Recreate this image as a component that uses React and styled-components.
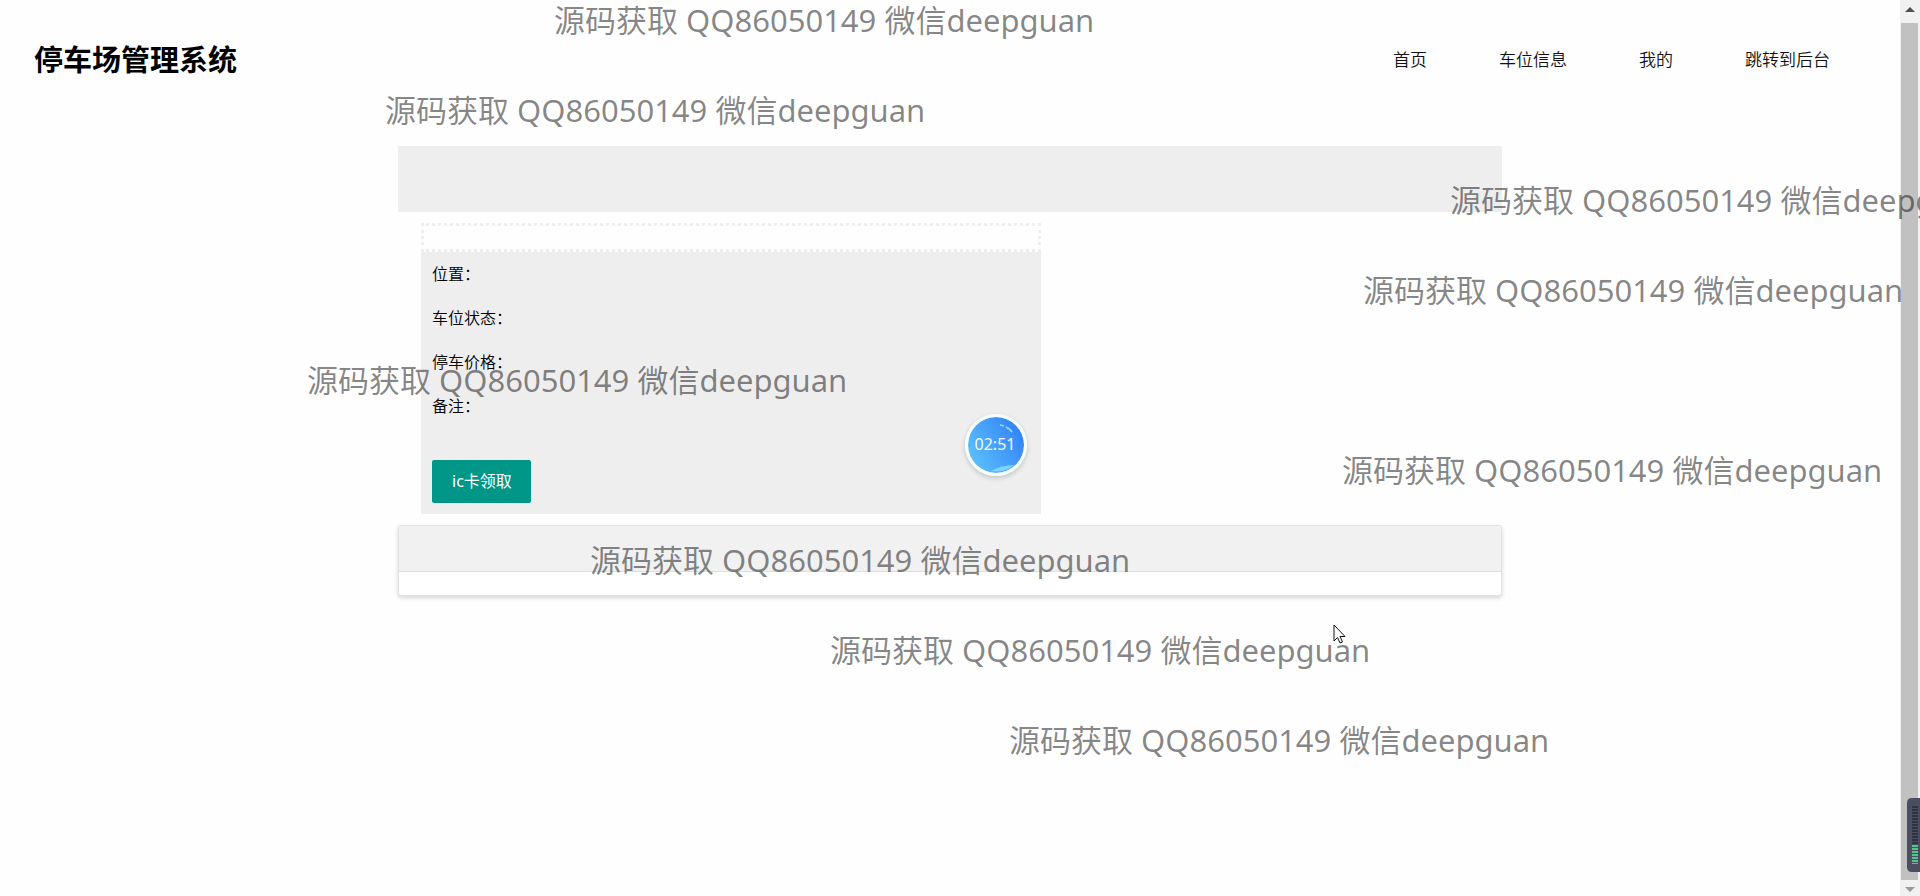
import React from "react";
import styled, { createGlobalStyle } from "styled-components";

const GlobalStyle = createGlobalStyle`
  *, *::before, *::after { box-sizing: border-box; }
  body {
    margin: 0;
    background: #fefefe;
    color: #000;
    font-family: "Noto Sans", "Noto Sans CJK SC", sans-serif;
    font-size: 16px;
  }
`;

const Page = styled.div`
  position: relative;
  display: grid;
  grid-template-columns: minmax(0, 1fr) 20px;
  min-height: 100vh;
  overflow: hidden;
`;

const Content = styled.div`
  display: flex;
  flex-direction: column;
`;

const Header = styled.header`
  display: flex;
  align-items: center;
  justify-content: space-between;
  height: 120px;
  padding: 0 34px;
`;

const Logo = styled.h1`
  margin: 0;
  font-size: 29px;
  line-height: 40px;
  font-weight: 700;
`;

const Nav = styled.nav`
  display: flex;
  gap: 72px;
  padding: 0 36px 2px 0;
`;

const NavLink = styled.a`
  color: #111;
  font-size: 17px;
  line-height: 24px;
  font-weight: 350;
  font-family: "Noto Sans CJK SC", sans-serif;
  text-decoration: none;
`;

const Main = styled.main`
  width: 100%;
  max-width: 1104px;
  margin: 26px auto 0;
`;

const Banner = styled.div`
  height: 66px;
  background: #eee;
`;

const Details = styled.section`
  position: relative;
  max-width: 620px;
  margin: 11px 23px;
  background: #eee;
`;

const DetailsTitle = styled.div`
  height: 29px;
  border: 3px dotted #eee;
  background: #fefefe;
`;

const DetailsBody = styled.div`
  padding: 0 11px 11px;
`;

const Field = styled.p`
  margin: 0 0 2px;
  line-height: 42px;
  font-weight: 350;
  font-family: "Noto Sans CJK SC", sans-serif;
`;

const ClaimButton = styled.button`
  display: block;
  height: 43px;
  margin-top: 34px;
  padding: 0 19px 2px 20px;
  border: 0;
  border-radius: 2px;
  background: #009688;
  color: #fff;
  font: inherit;
  line-height: 24px;
`;

const Timer = styled.div`
  position: absolute;
  right: 14px;
  bottom: 38px;
  display: grid;
  place-items: center;
  width: 62px;
  height: 62px;
  border: 3px solid #f5fdff;
  border-radius: 50%;
  background: linear-gradient(60deg, #5cc0fb 10%, #3282f8 90%) padding-box;
  box-shadow: 0 2px 5px rgba(0, 0, 0, 0.18);
  color: #f0f8ff;
  line-height: 20px;

  svg, time { grid-area: 1 / 1; }
  time { padding: 0 2px 2px 0; }
`;

const Card = styled.section`
  height: 71px;
  border: 1px solid #e2e2e2;
  border-radius: 3px;
  background: #fff;
  box-shadow: 0 2px 4px rgba(0, 0, 0, 0.16);
`;

const CardHeader = styled.div`
  height: 46px;
  border-bottom: 1px solid #ddd;
  background: #f1f1f1;
`;

const ScrollTrack = styled.div`
  display: flex;
  flex-direction: column;
  padding: 0 2px 0 1px;
  background: #f1f1f1;
`;

const ScrollArrow = styled.div`
  display: grid;
  place-items: center;
  height: ${(p) => (p.$end ? 16 : 23)}px;
  padding: ${(p) => (p.$end ? "2px 0 0" : "0 0 4px")};
  color: ${(p) => (p.$end ? "#9a9a9a" : "#505050")};

  svg { display: block; }
`;

const ScrollThumb = styled.div`
  flex: 1;
  background: #c1c1c1;
`;

const Overlay = styled.div`
  position: absolute;
  inset: 0;
  overflow: hidden;
  pointer-events: none;
`;

const Watermark = styled.span`
  position: absolute;
  left: ${(p) => p.$x}px;
  top: ${(p) => p.$y}px;
  color: rgba(0, 0, 0, 0.48);
  font-size: 31px;
  line-height: 41px;
  white-space: nowrap;
`;

const Cursor = styled.svg`
  position: absolute;
  left: 1333px;
  top: 624px;
`;

const Meter = styled.svg`
  position: absolute;
  right: 0;
  bottom: 24px;
`;

const LINKS = ["首页", "车位信息", "我的", "跳转到后台"];
const FIELDS = ["位置：", "车位状态：", "停车价格：", "备注："];
const MARKS = [
  [554, 0],
  [385, 90],
  [1450, 180],
  [1363, 270],
  [307, 360],
  [1342, 450],
  [590, 540],
  [830, 630],
  [1009, 720],
];

export default function App() {
  return (
    <>
      <GlobalStyle />
      <Page>
        <Content>
          <Header>
            <Logo>停车场管理系统</Logo>
            <Nav>
              {LINKS.map((t) => (
                <NavLink key={t} href="#">{t}</NavLink>
              ))}
            </Nav>
          </Header>
          <Main>
            <Banner />
            <Details>
              <DetailsTitle />
              <DetailsBody>
                {FIELDS.map((t) => (
                  <Field key={t}>{t}</Field>
                ))}
                <ClaimButton type="button">ic卡领取</ClaimButton>
              </DetailsBody>
              <Timer>
                <svg width="56" height="56" viewBox="0 0 56 56" aria-hidden="true">
                  <path d="M23 54 Q34 48 46 48 Q38 56 23 54Z" fill="#7fd4ff" />
                  <path d="M32 8 L36 9 M38 10 Q42 12 44 15" fill="none" stroke="#9fd8ff" strokeWidth="1.4" />
                </svg>
                <time>02:51</time>
              </Timer>
            </Details>
            <Card>
              <CardHeader />
            </Card>
          </Main>
        </Content>
        <ScrollTrack aria-hidden="true">
          <ScrollArrow>
            <svg width="10" height="5" viewBox="0 0 10 5"><path d="M0 5 L5 0 L10 5Z" fill="currentColor" /></svg>
          </ScrollArrow>
          <ScrollThumb />
          <ScrollArrow $end>
            <svg width="10" height="5" viewBox="0 0 10 5"><path d="M0 0 L5 5 L10 0Z" fill="currentColor" /></svg>
          </ScrollArrow>
        </ScrollTrack>
        <Overlay>
          <Meter width="13" height="74" viewBox="0 0 13 74">
            <path d="M13 0 H5 Q0 0 0 5 V69 Q0 74 5 74 H13Z" fill="#4a4e60" />
            <path d="M8 8 V46" stroke="#303442" strokeWidth="6" strokeDasharray="2 1" />
            <path d="M8 47 V66" stroke="#55c48a" strokeWidth="6" strokeDasharray="2 1" />
          </Meter>
          {MARKS.map(([x, y]) => (
            <Watermark key={y} $x={x} $y={y}>源码获取 QQ86050149 微信deepguan</Watermark>
          ))}
          <Cursor width="13" height="20" viewBox="0 0 13 20">
            <path d="M1 1 V17 L4.5 13.5 L7 19 L9.5 18 L7 12.5 H12Z" fill="#fff" stroke="#111" strokeWidth="1" />
          </Cursor>
        </Overlay>
      </Page>
    </>
  );
}
